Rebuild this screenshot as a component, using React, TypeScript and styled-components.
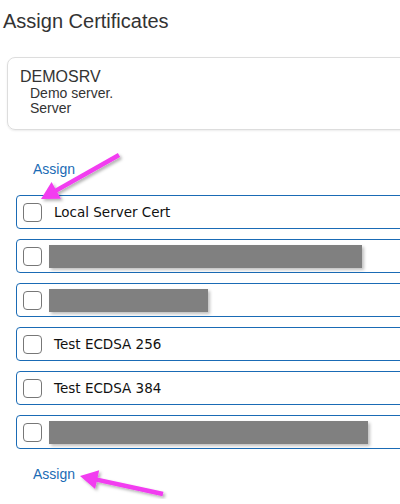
import React from 'react';
import styled, { createGlobalStyle } from 'styled-components';

const Global = createGlobalStyle`
  body { margin: 0; background: #fff; font-family: "Liberation Sans", Arial, sans-serif; overflow: hidden; }
`;

const Page = styled.div`
  position: relative;
  width: 400px;
  height: 504px;
  overflow: hidden;
`;

const Title = styled.h1`
  margin: 0;
  padding: 10px 0 0 3px;
  font-size: 20px;
  font-weight: normal;
  color: #333;
  line-height: 22px;
`;

const Card = styled.div`
  margin: 25px -20px 0 7px;
  height: 73px;
  border: 1px solid #ddd;
  border-radius: 8px;
  box-shadow: 0 1px 2px rgba(0,0,0,0.08);
  padding: 10px 12px;
  box-sizing: border-box;
  color: #333;
`;

const Name = styled.div`
  font-size: 16px;
  line-height: 18px;
`;

const Sub = styled.div`
  font-size: 14px;
  line-height: 15px;
  padding-left: 10px;
`;

const AssignLink = styled.a<{ $top: number }>`
  display: block;
  margin: ${p => p.$top}px 0 0 33px;
  font-size: 14px;
  line-height: 16px;
  color: #1a6bb5;
  text-decoration: none;
`;

const List = styled.div`
  margin: 18px -20px 0 16px;
  display: flex;
  flex-direction: column;
  gap: 10px;
`;

const Row = styled.label`
  display: flex;
  align-items: center;
  gap: 12px;
  height: 34px;
  box-sizing: border-box;
  border: 1px solid #1a6bb5;
  border-radius: 4px;
  padding-left: 6px;
  font-family: "DejaVu Sans", Verdana, sans-serif;
  font-size: 13.5px;
  color: #111;
`;

const Box = styled.span`
  width: 17px;
  height: 17px;
  border: 1.5px solid #777;
  border-radius: 4px;
  flex: none;
`;

const Redacted = styled.span<{ $w: number }>`
  width: ${p => p.$w}px;
  height: 23px;
  background: #808080;
  box-shadow: 2px 2px 3px rgba(0,0,0,0.25);
  margin-left: -5px;
`;

const Arrows = styled.svg`
  position: absolute;
  left: 0;
  top: 0;
  pointer-events: none;
`;

const rows: Array<{ label?: string; w?: number }> = [
  { label: 'Local Server Cert' },
  { w: 313 },
  { w: 159 },
  { label: 'Test ECDSA 256' },
  { label: 'Test ECDSA 384' },
  { w: 319 },
];

const Arrow = ({ x1, y1, x2, y2 }: { x1: number; y1: number; x2: number; y2: number }) => {
  const a = Math.atan2(y2 - y1, x2 - x1);
  const l = 20, s = 0.5;
  const p1 = `${x2 - l * Math.cos(a - s)},${y2 - l * Math.sin(a - s)}`;
  const p2 = `${x2 - l * Math.cos(a + s)},${y2 - l * Math.sin(a + s)}`;
  return (
    <g filter="url(#sh)">
      <line x1={x1} y1={y1} x2={x2 - 10 * Math.cos(a)} y2={y2 - 10 * Math.sin(a)} stroke="#f23cf0" strokeWidth={4.5} />
      <polygon points={`${x2},${y2} ${p1} ${p2}`} fill="#f23cf0" />
    </g>
  );
};

export default function App() {
  return (
    <Page>
      <Global />
      <Title>Assign Certificates</Title>
      <Card>
        <Name>DEMOSRV</Name>
        <Sub>Demo server.</Sub>
        <Sub>Server</Sub>
      </Card>
      <AssignLink href="#" $top={31}>Assign</AssignLink>
      <List>
        {rows.map((r, i) => (
          <Row key={i}>
            <Box />
            {r.label ? r.label : <Redacted $w={r.w ?? 100} />}
          </Row>
        ))}
      </List>
      <AssignLink href="#" $top={17}>Assign</AssignLink>
      <Arrows width={400} height={504}>
        <defs>
          <filter id="sh" x="-20%" y="-20%" width="140%" height="140%">
            <feDropShadow dx="2" dy="2" stdDeviation="1.5" floodColor="#000" floodOpacity="0.3" />
          </filter>
        </defs>
        <Arrow x1={119} y1={155} x2={41} y2={199} />
        <Arrow x1={163} y1={494} x2={80} y2={476} />
      </Arrows>
    </Page>
  );
}
